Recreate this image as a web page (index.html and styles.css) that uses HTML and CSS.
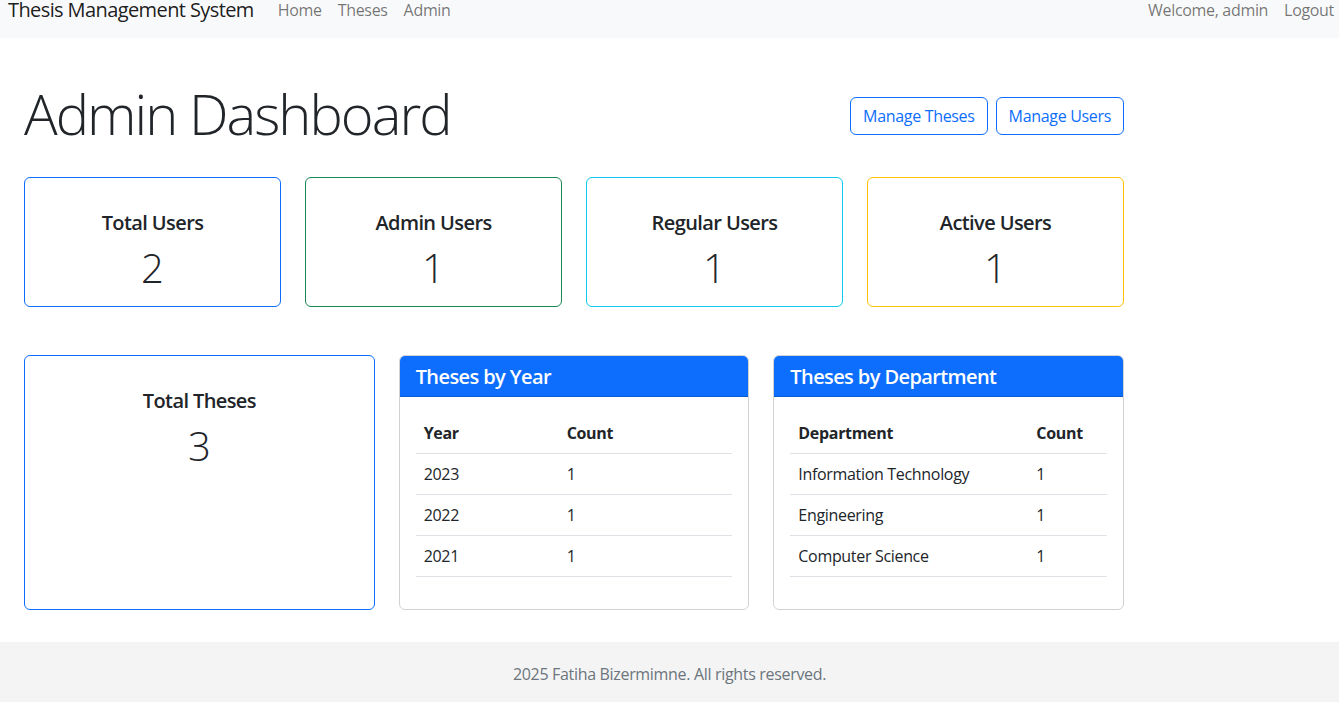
FILE: index.html
```html
<!DOCTYPE html>
<html lang="en">
<head>
<meta charset="utf-8">
<title>Admin Dashboard - Thesis Management System</title>
<link rel="stylesheet" href="styles.css">
</head>
<body>
<nav class="navbar">
  <div class="nav-left">
    <a class="brand" href="#">Thesis Management System</a>
    <ul class="nav-links">
      <li><a href="#">Home</a></li>
      <li><a href="#">Theses</a></li>
      <li><a href="#">Admin</a></li>
    </ul>
  </div>
  <div class="nav-right">
    <span class="nav-text">Welcome, admin</span>
    <a class="nav-link" href="#">Logout</a>
  </div>
</nav>

<main class="container">
  <div class="page-head">
    <h1 class="display-title">Admin Dashboard</h1>
    <div class="actions">
      <a class="btn-outline" href="#">Manage Theses</a>
      <a class="btn-outline" href="#">Manage Users</a>
    </div>
  </div>

  <div class="stats">
    <div class="stat-card border-primary">
      <h5 class="stat-title">Total Users</h5>
      <p class="stat-value">2</p>
    </div>
    <div class="stat-card border-success">
      <h5 class="stat-title">Admin Users</h5>
      <p class="stat-value">1</p>
    </div>
    <div class="stat-card border-info">
      <h5 class="stat-title">Regular Users</h5>
      <p class="stat-value">1</p>
    </div>
    <div class="stat-card border-warning">
      <h5 class="stat-title">Active Users</h5>
      <p class="stat-value">1</p>
    </div>
  </div>

  <div class="lower">
    <div class="stat-card border-primary tall">
      <h5 class="stat-title">Total Theses</h5>
      <p class="stat-value">3</p>
    </div>
    <div class="table-card">
      <div class="card-header">Theses by Year</div>
      <div class="card-body">
        <table class="table">
          <thead>
            <tr><th class="col-year">Year</th><th>Count</th></tr>
          </thead>
          <tbody>
            <tr><td>2023</td><td>1</td></tr>
            <tr><td>2022</td><td>1</td></tr>
            <tr><td>2021</td><td>1</td></tr>
          </tbody>
        </table>
      </div>
    </div>
    <div class="table-card">
      <div class="card-header">Theses by Department</div>
      <div class="card-body">
        <table class="table">
          <thead>
            <tr><th class="col-dept">Department</th><th>Count</th></tr>
          </thead>
          <tbody>
            <tr><td>Information Technology</td><td>1</td></tr>
            <tr><td>Engineering</td><td>1</td></tr>
            <tr><td>Computer Science</td><td>1</td></tr>
          </tbody>
        </table>
      </div>
    </div>
  </div>
</main>

<footer class="footer">
  <p>2025 Fatiha Bizermimne. All rights reserved.</p>
</footer>
</body>
</html>
```

FILE: styles.css
```css
* { box-sizing: border-box; }

html, body {
  margin: 0;
  padding: 0;
}

body {
  font-family: "Open Sans", "Noto Sans", "Liberation Sans", sans-serif;
  font-size: 16px;
  line-height: 1.5;
  letter-spacing: -0.02em;
  color: #212529;
  background: #fff;
}

a { text-decoration: none; }

/* Navbar */
.navbar {
  height: 38px;
  background: #f8f9fa;
  display: flex;
  justify-content: space-between;
  align-items: flex-start;
  padding: 0 0 0 8px;
}

.nav-left, .nav-right {
  display: flex;
  align-items: center;
  height: 20px;
}

.brand {
  font-size: 20px;
  line-height: 20px;
  letter-spacing: -0.03em;
  color: rgba(0, 0, 0, 0.9);
  margin-right: 16px;
}

.nav-links {
  list-style: none;
  margin: 0;
  padding: 0;
  display: flex;
}

.nav-links a,
.nav-link,
.nav-text {
  display: block;
  padding: 0 8px;
  font-size: 16px;
  line-height: 20px;
  color: rgba(0, 0, 0, 0.55);
}

.nav-right .nav-link {
  padding-right: 5px;
}

/* Main */
.container {
  width: 1100px;
  margin: 0 0 0 24px;
  padding-top: 42px;
}

.page-head {
  display: flex;
  justify-content: space-between;
  align-items: center;
  margin-bottom: 22px;
}

.display-title {
  margin: 0 0 8px 0;
  font-size: 56px;
  font-weight: 300;
  line-height: 1.2;
  letter-spacing: -0.035em;
}

.actions {
  display: flex;
  gap: 8px;
  margin-bottom: 4px;
}

.btn-outline {
  display: inline-block;
  padding: 6px 12px;
  font-size: 16px;
  line-height: 24px;
  color: #0d6efd;
  border: 1px solid #0d6efd;
  border-radius: 6px;
}

.stats {
  display: grid;
  grid-template-columns: repeat(4, 1fr);
  gap: 24px;
  margin-bottom: 48px;
}

.stat-card {
  border: 1px solid #0d6efd;
  border-radius: 6px;
  text-align: center;
  padding: 33px 16px 13px;
  height: 130px;
}

.stat-card.tall { height: auto; }

.border-primary { border-color: #0d6efd; }
.border-success { border-color: #198754; }
.border-info { border-color: #0dcaf0; }
.border-warning { border-color: #ffc107; }

.stat-title {
  margin: 0 0 9px 0;
  font-size: 20px;
  font-weight: 600;
  line-height: 1.2;
  letter-spacing: -0.03em;
}

.stat-value {
  margin: 0;
  font-size: 40px;
  font-weight: 300;
  line-height: 1.2;
  letter-spacing: 0;
}

.lower {
  display: grid;
  grid-template-columns: repeat(3, 1fr);
  gap: 24px;
  margin-bottom: 32px;
}

.table-card {
  border: 1px solid rgba(0, 0, 0, 0.175);
  border-radius: 6px;
  overflow: hidden;
}

.card-header {
  background: #0d6efd;
  color: #fff;
  padding: 9px 16px 7px;
  font-size: 20px;
  font-weight: 600;
  line-height: 24px;
  letter-spacing: -0.03em;
  border-bottom: 1px solid rgba(0, 0, 0, 0.175);
}

.card-body {
  padding: 16px;
}

.table {
  width: 100%;
  border-collapse: collapse;
  margin-bottom: 16px;
}

.table th,
.table td {
  padding: 8px;
  text-align: left;
  border-bottom: 1px solid #dee2e6;
  line-height: 24px;
  vertical-align: top;
}

.table th { font-weight: 700; }

.col-year { width: 143px; }
.col-dept { width: 238px; }

/* Footer */
.footer {
  background: #f4f4f4;
  height: 60px;
  display: flex;
  align-items: center;
  justify-content: center;
  padding-top: 4px;
}

.footer p {
  margin: 0;
  color: #6c757d;
  font-size: 16px;
}
```
